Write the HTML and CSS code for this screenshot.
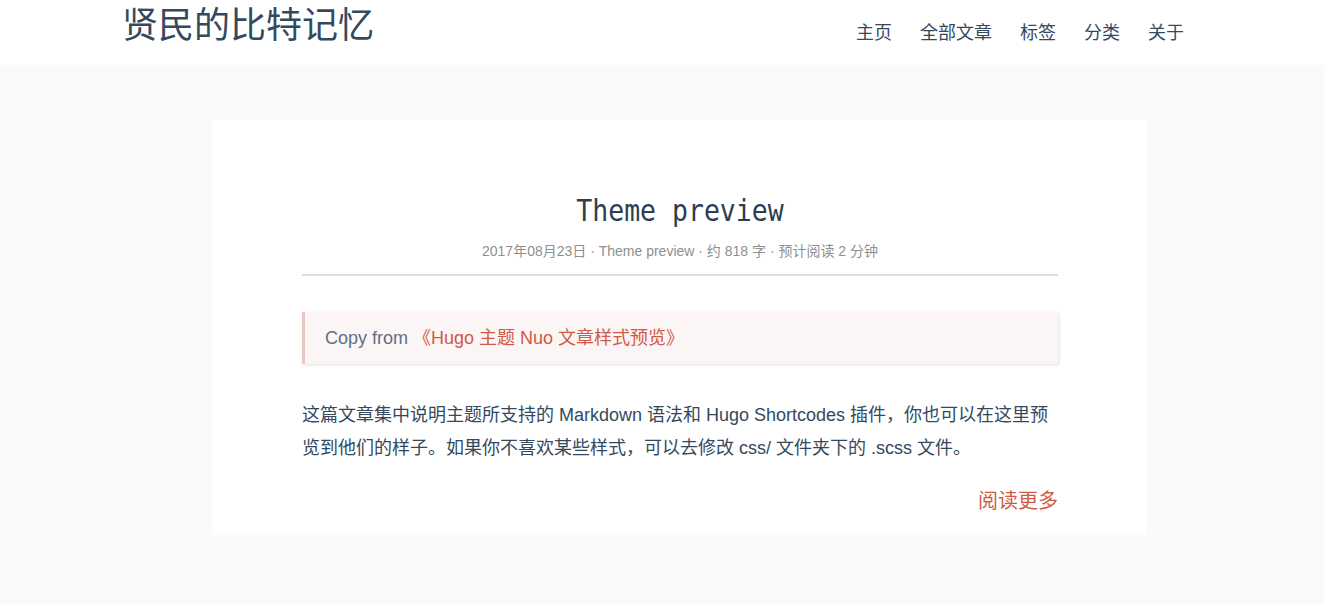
FILE: index.html
```html
<!DOCTYPE html>
<html lang="zh-CN">
<head>
<meta charset="utf-8">
<title>贤民的比特记忆</title>
<link rel="stylesheet" href="styles.css">
</head>
<body>
<header class="site-header">
  <div class="header-inner">
    <a class="site-title" href="#">贤民的比特记忆</a>
    <nav class="site-nav">
      <a href="#">主页</a>
      <a href="#">全部文章</a>
      <a href="#">标签</a>
      <a href="#">分类</a>
      <a href="#">关于</a>
    </nav>
  </div>
</header>
<main class="main">
  <article class="post-card">
    <header class="post-header">
      <h1 class="post-title">Theme preview</h1>
      <div class="post-meta">2017年08月23日 · Theme preview · 约 818 字 · 预计阅读 2 分钟</div>
    </header>
    <blockquote class="quote">Copy from <a href="#">《Hugo 主题 Nuo 文章样式预览》</a></blockquote>
    <p class="summary">这篇文章集中说明主题所支持的 Markdown 语法和 Hugo Shortcodes 插件，你也可以在这里预览到他们的样子。如果你不喜欢某些样式，可以去修改 css/ 文件夹下的 .scss 文件。</p>
    <div class="more"><a href="#">阅读更多</a></div>
  </article>
</main>
</body>
</html>
```
FILE: styles.css
```css
* { box-sizing: border-box; }
html, body { margin: 0; padding: 0; }
body {
  background: #fafafa;
  color: #34495e;
  font-family: "Liberation Sans", "Noto Sans CJK SC", sans-serif;
  height: 604px;
}
a { text-decoration: none; }
.site-header {
  background: #fff;
  height: 65px;
}
.header-inner {
  width: 1082px;
  margin: 0 auto;
  padding: 0 5px 0 1px;
  display: flex;
  justify-content: space-between;
  align-items: flex-start;
}
.site-title {
  font-size: 36px;
  line-height: 52px;
  color: #34495e;
}
.site-nav {
  display: flex;
  padding-top: 20px;
}
.site-nav a {
  font-size: 18px;
  line-height: 26px;
  color: #34495e;
  padding: 0 14px;
}
.main {
  padding-top: 55px;
}
.post-card {
  margin-left: 212px;
  width: 935px;
  background: #fff;
  padding: 69px 89px 20px 90px;
}
.post-header {
  text-align: center;
  border-bottom: 2px solid #dedede;
  padding-bottom: 13px;
}
.post-title {
  margin: 0;
  font-family: "DejaVu Sans Mono", "Liberation Mono", monospace;
  font-weight: normal;
  font-size: 26.5px;
  line-height: 44px;
  color: #2c3e50;
  transform: scaleY(1.15);
}
.post-meta {
  font-size: 14px;
  line-height: 20px;
  color: #8f8f8f;
  margin-top: 8px;
}
.quote {
  margin: 36px 0 0;
  background: #fbf5f5;
  border-left: 3px solid #ecc6c1;
  box-shadow: 1px 1px 3px rgba(0,0,0,0.12);
  padding: 13px 20px;
  font-size: 18px;
  line-height: 26px;
  color: #5d7086;
}
.quote a { color: #d05a45; }
.summary {
  margin: 35px 0 0;
  font-size: 18px;
  line-height: 33px;
  color: #34495e;
}
.more {
  text-align: right;
  margin-top: 22px;
}
.more a {
  font-size: 20px;
  line-height: 28px;
  color: #d05a45;
}
```
